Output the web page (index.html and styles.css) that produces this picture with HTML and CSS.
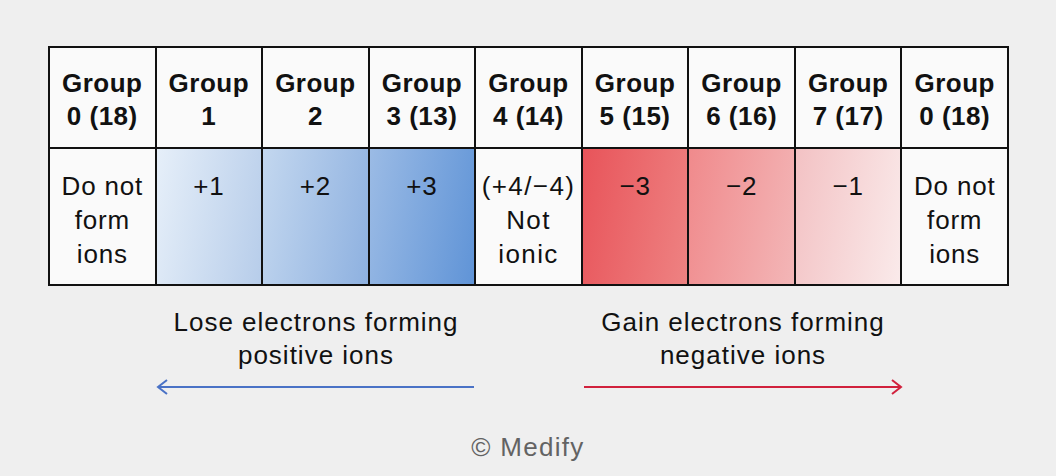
FILE: index.html
```html
<!DOCTYPE html>
<html lang="en">
<head>
<meta charset="utf-8">
<title>Ions by group</title>
<link rel="stylesheet" href="styles.css">
</head>
<body>
<main class="page">
  <div class="ion-table">
    <div class="cell head">Group<br>0 (18)</div>
    <div class="cell head">Group<br>1</div>
    <div class="cell head">Group<br>2</div>
    <div class="cell head">Group<br>3 (13)</div>
    <div class="cell head">Group<br>4 (14)</div>
    <div class="cell head">Group<br>5 (15)</div>
    <div class="cell head">Group<br>6 (16)</div>
    <div class="cell head">Group<br>7 (17)</div>
    <div class="cell head">Group<br>0 (18)</div>

    <div class="cell body">Do not<br>form<br>ions</div>
    <div class="cell body pos1">+1</div>
    <div class="cell body pos2">+2</div>
    <div class="cell body pos3">+3</div>
    <div class="cell body narrow">(+4/−4)<br>Not<br>ionic</div>
    <div class="cell body neg3">−3</div>
    <div class="cell body neg2">−2</div>
    <div class="cell body neg1">−1</div>
    <div class="cell body">Do not<br>form<br>ions</div>
  </div>

  <div class="legend">
    <div class="legend-item">
      <p class="caption">Lose electrons forming<br>positive ions</p>
      <svg class="arrow" width="320" height="16" viewBox="0 0 320 16">
        <path d="M318 8H2M11 1L2 8L11 15" fill="none" stroke="#4a72c6" stroke-width="2"/>
      </svg>
    </div>
    <div class="legend-item">
      <p class="caption">Gain electrons forming<br>negative ions</p>
      <svg class="arrow" width="320" height="16" viewBox="0 0 320 16">
        <path d="M1 8H318M309 1L318 8L309 15" fill="none" stroke="#d1213d" stroke-width="2"/>
      </svg>
    </div>
  </div>

  <footer class="credit">© Medify</footer>
</main>
</body>
</html>
```
FILE: styles.css
```css
html, body {
  margin: 0;
  padding: 0;
}

body {
  background: #efefef;
  font-family: "Liberation Sans", Arial, sans-serif;
  color: #111;
}

.page {
  width: 1056px;
  height: 476px;
  padding-top: 46px;
  box-sizing: border-box;
}

.ion-table {
  margin-left: 48px;
  width: 961px;
  box-sizing: border-box;
  display: grid;
  grid-template-columns: repeat(9, 1fr);
  grid-template-rows: 99px 135px;
  gap: 2px;
  padding: 2px;
  background: #111;
}

.cell {
  background: #fafafa;
  text-align: center;
  font-size: 26px;
  letter-spacing: 0.8px;
}

.head {
  font-weight: bold;
  font-size: 26px;
  letter-spacing: 0.5px;
  line-height: 33px;
  padding-top: 5px;
  box-sizing: border-box;
  display: flex;
  align-items: center;
  justify-content: center;
}

.body {
  line-height: 34px;
  padding-top: 20px;
  box-sizing: border-box;
}

.narrow {
  letter-spacing: 1.4px;
}

.pos1 { background: linear-gradient(100deg, #e6eff9 0%, #b7cdea 100%); }
.pos2 { background: linear-gradient(100deg, #c3d7ef 0%, #8eb1e0 100%); }
.pos3 { background: linear-gradient(100deg, #9bbbe5 0%, #6094d7 100%); }
.neg3 { background: linear-gradient(100deg, #e8545a 0%, #ee8282 100%); }
.neg2 { background: linear-gradient(100deg, #f08a8c 0%, #f3b6b7 100%); }
.neg1 { background: linear-gradient(100deg, #f3c2c4 0%, #faeaea 100%); }

.legend {
  display: flex;
  gap: 107px;
  margin-left: 156px;
  margin-top: 20px;
}

.legend-item {
  width: 320px;
  display: flex;
  flex-direction: column;
  align-items: center;
}

.caption {
  margin: 0;
  font-size: 26px;
  line-height: 33px;
  letter-spacing: 1px;
  text-align: center;
}

.arrow {
  display: block;
  margin-top: 7px;
}

.credit {
  margin-top: 36px;
  text-align: center;
  font-size: 26px;
  line-height: 33px;
  letter-spacing: 1.3px;
  color: #636363;
}
```
